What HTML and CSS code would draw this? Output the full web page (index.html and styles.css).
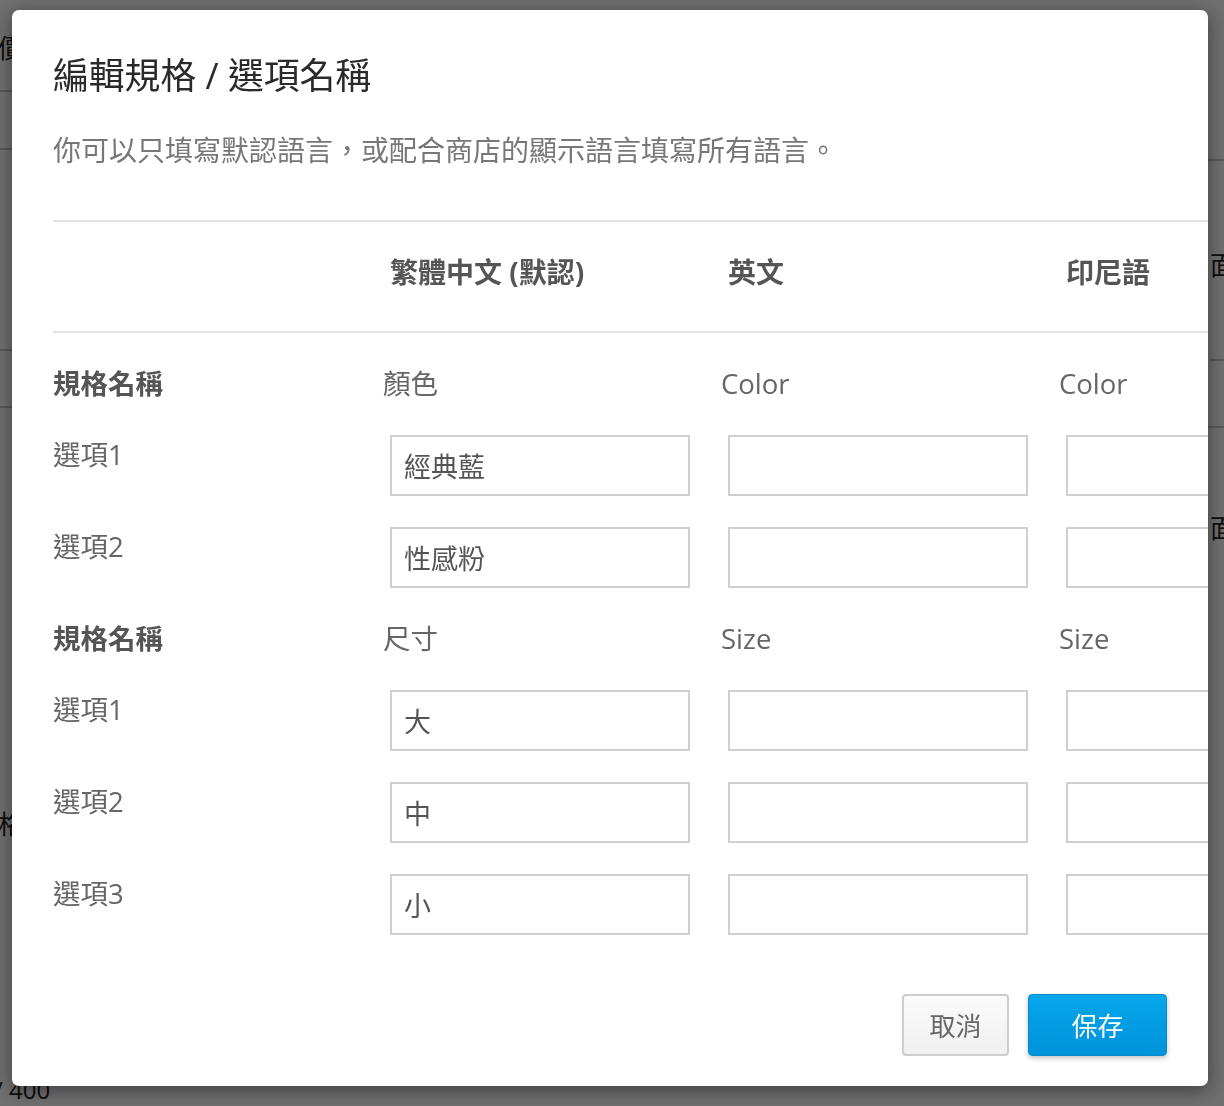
FILE: index.html
```html
<!DOCTYPE html>
<html lang="zh-Hant">
  <head>
    <meta charset="utf-8" />
    <title>編輯規格 / 選項名稱</title>
    <link rel="stylesheet" href="styles.css">
  </head>
  <body>
    <!-- the page behind the dialog -->
    <div class="page">
      <div class="page-left">
        <div class="pl-row pl-1"><span>單價</span></div>
        <div class="pl-row pl-2"></div>
        <div class="pl-row pl-3"></div>
        <div class="pl-row pl-4"></div>
        <div class="pl-row pl-5"><span>規格</span></div>
        <div class="pl-count">0 / 400</div>
      </div>
      <div class="page-right">
        <div class="pr-row pr-1"></div>
        <div class="pr-row pr-2"><span>面</span></div>
        <div class="pr-row pr-3"></div>
        <div class="pr-row pr-4"><span>面</span></div>
      </div>
    </div>

    <div class="overlay">
      <div class="modal">
        <h2 class="modal-title">編輯規格 / 選項名稱</h2>
        <p class="modal-desc">你可以只填寫默認語言，或配合商店的顯示語言填寫所有語言。</p>

        <div class="lang-table">
          <div class="lang-head">
            <div></div>
            <div class="th">繁體中文 (默認)</div>
            <div class="th">英文</div>
            <div class="th">印尼語</div>
          </div>
          <div class="lang-body">
            <div class="label strong">規格名稱</div>
            <div class="text">顏色</div>
            <div class="text">Color</div>
            <div class="text">Color</div>

            <div class="label">選項1</div>
            <div><input class="field" type="text" value="經典藍"></div>
            <div><input class="field" type="text"></div>
            <div><input class="field" type="text"></div>

            <div class="label">選項2</div>
            <div><input class="field" type="text" value="性感粉"></div>
            <div><input class="field" type="text"></div>
            <div><input class="field" type="text"></div>

            <div class="label strong">規格名稱</div>
            <div class="text">尺寸</div>
            <div class="text">Size</div>
            <div class="text">Size</div>

            <div class="label">選項1</div>
            <div><input class="field" type="text" value="大"></div>
            <div><input class="field" type="text"></div>
            <div><input class="field" type="text"></div>

            <div class="label">選項2</div>
            <div><input class="field" type="text" value="中"></div>
            <div><input class="field" type="text"></div>
            <div><input class="field" type="text"></div>

            <div class="label">選項3</div>
            <div><input class="field" type="text" value="小"></div>
            <div><input class="field" type="text"></div>
            <div><input class="field" type="text"></div>
          </div>
        </div>

        <div class="modal-footer">
          <button class="btn btn-cancel" type="button">取消</button>
          <button class="btn btn-save" type="button">保存</button>
        </div>
      </div>
    </div>
  </body>
</html>
```

FILE: styles.css
```css
html,
body {
  margin: 0;
  height: 100%;
}

body {
  font-family: "Open Sans", "Noto Sans CJK TC", sans-serif;
  background-color: #ffffff;
  overflow: hidden;
}

/* page behind the overlay */
.page {
  display: flex;
  justify-content: space-between;
  height: 1106px;
  color: #222;
}

.page-left {
  width: 60px;
  margin-left: -48px;
  display: flex;
  flex-direction: column;
}

.pl-row {
  border-bottom: 2px solid #c8c8c8;
  font-size: 26px;
  text-align: right;
  box-sizing: border-box;
}

.pl-1 {
  height: 94px;
  padding-top: 28px;
  margin-right: -12px;
}

.pl-2 {
  height: 59px;
}

.pl-3 {
  height: 207px;
}

.pl-4 {
  height: 59px;
}

.pl-5 {
  height: 650px;
  border-bottom: none;
  padding-top: 396px;
  margin-right: -12px;
}

.pl-count {
  margin-left: 22px;
  margin-top: 22px;
  font-size: 24px;
  white-space: nowrap;
}

.page-right {
  width: 40px;
  margin-right: -24px;
  display: flex;
  flex-direction: column;
}

.pr-row {
  border-bottom: 2px solid #c8c8c8;
  font-size: 26px;
  box-sizing: border-box;
}

.pr-1 {
  height: 161px;
}

.pr-2 {
  height: 200px;
  padding-top: 84px;
  margin-left: 2px;
}

.pr-3 {
  height: 67px;
}

.pr-4 {
  height: 200px;
  border-bottom: none;
  padding-top: 80px;
  margin-left: 2px;
}

/* dialog */
.overlay {
  position: fixed;
  inset: 0;
  background-color: rgba(0, 0, 0, 0.57);
  padding: 10px 16px 20px 12px;
  box-sizing: border-box;
  display: flex;
}

.modal {
  flex: 1;
  background-color: #ffffff;
  border-radius: 7px;
  box-shadow: 0 4px 18px rgba(0, 0, 0, 0.45);
  overflow: hidden;
  padding: 40px 0 30px 41px;
  display: flex;
  flex-direction: column;
}

.modal-title {
  margin: 0;
  font-size: 35.8px;
  line-height: 50px;
  font-weight: 400;
  color: #2a2a2a;
}

.modal-desc {
  margin: 30px 0 0;
  font-size: 28px;
  line-height: 40px;
  color: #777;
}

.lang-table {
  margin-top: 50px;
  width: 1400px;
}

.lang-head,
.lang-body {
  display: grid;
  grid-template-columns: 330px 338px 338px 338px;
}

.lang-head {
  border-top: 2px solid #e2e2e2;
  border-bottom: 2px solid #e2e2e2;
  padding: 30px 0 39px;
}

.th {
  padding-left: 7px;
  font-size: 28px;
  line-height: 40px;
  font-weight: 700;
  color: #555;
}

.lang-body {
  row-gap: 31px;
  padding-top: 31px;
}

.label,
.text {
  font-size: 27.5px;
  line-height: 40px;
  color: #666;
}

.strong {
  font-weight: 700;
  color: #555;
}

.field {
  margin-left: 7px;
  width: 300px;
  height: 61px;
  box-sizing: border-box;
  border: 2px solid #cfcfcf;
  border-radius: 0;
  padding: 0 12px;
  font-family: inherit;
  font-size: 27px;
  color: #555;
  outline: none;
}

.modal-footer {
  margin-top: auto;
  display: flex;
  justify-content: flex-end;
  gap: 19px;
  padding-right: 41px;
}

.btn {
  height: 62px;
  border-radius: 4px;
  font-family: inherit;
  font-size: 26px;
  cursor: pointer;
}

.btn-cancel {
  width: 107px;
  color: #666;
  background: linear-gradient(#fbfbfb, #f0f0f0);
  border: 2px solid #cdcdcd;
}

.btn-save {
  width: 139px;
  color: #ffffff;
  background: linear-gradient(#06a6ec, #0093d9);
  border: 1px solid #0a8acb;
  box-shadow: 0 2px 5px rgba(0, 0, 0, 0.25);
}
```
